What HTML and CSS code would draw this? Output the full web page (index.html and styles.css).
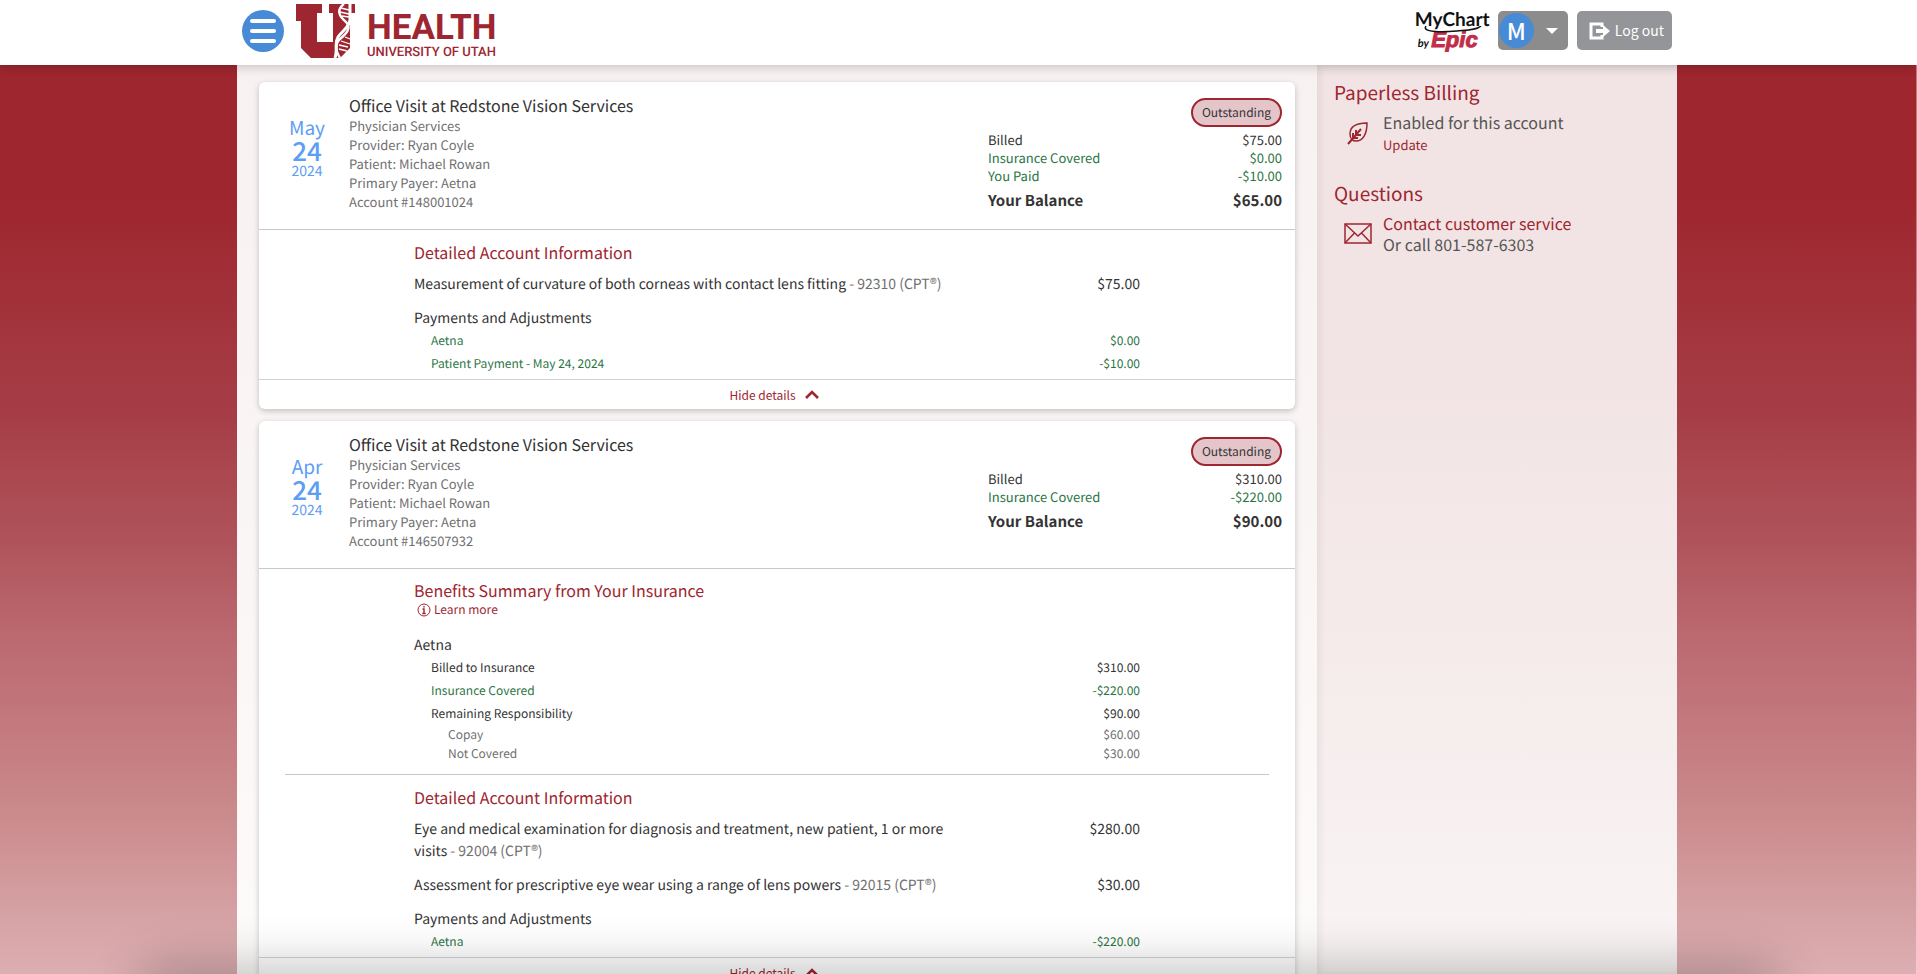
FILE: index.html
```html
<!DOCTYPE html>
<html lang="en">
<head>
<meta charset="utf-8">
<title>MyChart - Billing Account Details</title>
<link rel="stylesheet" href="styles.css">
</head>
<body>
<header class="topbar">
  <div class="topbar-inner">
    <button class="menu-button" type="button" aria-label="Menu"><span></span><span></span><span></span></button>
    <a class="brand" href="#" aria-label="University of Utah Health">
      <svg class="brand-mark" viewBox="0 0 59 54" aria-hidden="true">
        <path fill="#9e2630" d="M0 0H26V9H21V38H37V9H33V0H59V9H54V44L44 54H15L5 44V17H0Z"/>
        <path fill="none" stroke="#fff" stroke-width="2.4" d="M48 0C40 6 43 12 50 18C56 24 50 30 44 35C39 40 39 46 44 54"/>
        <path fill="none" stroke="#fff" stroke-width="3" d="M54 0V14C55 22 46 27 42 33C38 40 42 46 39 54"/>
        <path fill="none" stroke="#fff" stroke-width="1.3" d="M45 4L53 6M44 8L53 10M46 12L53 13M45 37L54 40M43 41L52 43M43 45L51 47M49 33L54 35"/>
      </svg>
      <span class="brand-text"><span class="brand-name">HEALTH</span><span class="brand-sub">UNIVERSITY OF UTAH</span></span>
    </a>
    <div class="topbar-right">
      <a class="mychart" href="#" aria-label="MyChart by Epic">
        <span class="mychart-name">MyChart</span>
        <svg class="swoosh" viewBox="0 0 60 7" aria-hidden="true"><path fill="none" stroke="#111" stroke-width="1.5" d="M3 0C-2 7 22 6 34 5C45 4 54 4 58 0"/></svg>
        <span class="mychart-by">by <b>Epic</b></span>
      </a>
      <button class="user-button" type="button" aria-label="Account menu"><span class="avatar">M</span><span class="caret"></span></button>
      <button class="logout-button" type="button">
        <svg width="21" height="20" viewBox="0 0 21 20" aria-hidden="true"><path fill="none" stroke="#fff" stroke-width="3" d="M13 6V3H2V17H13V14"/><path fill="#fff" d="M7 8H14V4L21 10L14 16V12H7Z"/></svg>
        Log out
      </button>
    </div>
  </div>
</header>
<div class="page">
  <main class="main">
    <article class="card">
      <div class="visit">
        <div class="date"><span class="month">May</span><span class="day">24</span><span class="year">2024</span></div>
        <div class="visit-info">
          <h2>Office Visit at Redstone Vision Services</h2>
          <p>Physician Services</p><p>Provider: Ryan Coyle</p><p>Patient: Michael Rowan</p><p>Primary Payer: Aetna</p><p>Account #148001024</p>
        </div>
        <div class="totals">
          <span class="pill">Outstanding</span>
          <div class="row"><span>Billed</span><span>$75.00</span></div>
          <div class="row green"><span>Insurance Covered</span><span>$0.00</span></div>
          <div class="row green"><span>You Paid</span><span>-$10.00</span></div>
          <div class="row balance"><span>Your Balance</span><span>$65.00</span></div>
        </div>
      </div>
      <section class="details">
        <h3>Detailed Account Information</h3>
        <div class="item"><span>Measurement of curvature of both corneas with contact lens fitting <span class="code">- 92310 (CPT®)</span></span><span>$75.00</span></div>
        <h4>Payments and Adjustments</h4>
        <div class="sub green"><span>Aetna</span><span>$0.00</span></div>
        <div class="sub green"><span>Patient Payment - May 24, 2024</span><span>-$10.00</span></div>
      </section>
      <button class="toggle" type="button">Hide details <svg width="14" height="9" viewBox="0 0 14 9" aria-hidden="true"><path fill="none" stroke="currentColor" stroke-width="2.6" d="M1 8L7 2L13 8"/></svg></button>
    </article>

    <article class="card">
      <div class="visit">
        <div class="date"><span class="month">Apr</span><span class="day">24</span><span class="year">2024</span></div>
        <div class="visit-info">
          <h2>Office Visit at Redstone Vision Services</h2>
          <p>Physician Services</p><p>Provider: Ryan Coyle</p><p>Patient: Michael Rowan</p><p>Primary Payer: Aetna</p><p>Account #146507932</p>
        </div>
        <div class="totals">
          <span class="pill">Outstanding</span>
          <div class="row"><span>Billed</span><span>$310.00</span></div>
          <div class="row green"><span>Insurance Covered</span><span>-$220.00</span></div>
          <div class="row balance"><span>Your Balance</span><span>$90.00</span></div>
        </div>
      </div>
      <section class="details benefits">
        <h3>Benefits Summary from Your Insurance</h3>
        <a class="learn" href="#"><svg width="14" height="14" viewBox="0 0 14 14" aria-hidden="true"><circle cx="7" cy="7" r="6" fill="none" stroke="currentColor"/><path fill="none" stroke="currentColor" stroke-width="1.4" d="M7 3V4.600M5.500 6H7V10.500M5.300 10.500H8.700"/></svg>Learn more</a>
        <h4>Aetna</h4>
        <div class="sub"><span>Billed to Insurance</span><span>$310.00</span></div>
        <div class="sub green"><span>Insurance Covered</span><span>-$220.00</span></div>
        <div class="sub"><span>Remaining Responsibility</span><span>$90.00</span></div>
        <div class="subsub"><span>Copay</span><span>$60.00</span></div>
        <div class="subsub"><span>Not Covered</span><span>$30.00</span></div>
      </section>
      <hr class="divider">
      <section class="details">
        <h3>Detailed Account Information</h3>
        <div class="item"><span>Eye and medical examination for diagnosis and treatment, new patient, 1 or more visits <span class="code">- 92004 (CPT®)</span></span><span>$280.00</span></div>
        <div class="item"><span>Assessment for prescriptive eye wear using a range of lens powers <span class="code">- 92015 (CPT®)</span></span><span>$30.00</span></div>
        <h4>Payments and Adjustments</h4>
        <div class="sub green"><span>Aetna</span><span>-$220.00</span></div>
      </section>
      <button class="toggle" type="button">Hide details <svg width="14" height="9" viewBox="0 0 14 9" aria-hidden="true"><path fill="none" stroke="currentColor" stroke-width="2.6" d="M1 8L7 2L13 8"/></svg></button>
    </article>
  </main>
  <aside class="sidebar">
    <h2>Paperless Billing</h2>
    <div class="side-item">
      <svg width="28" height="24" viewBox="0 0 28 24" aria-hidden="true"><g fill="none" stroke="#9e2630" stroke-width="1.500"><path d="M23 2C12 2 6 6 6 13C6 18 9 20 12 20C19 20 23 13 23 2Z"/><path stroke-width="2" d="M4 23L17 8M9 12V17H14M12 9V14H17"/></g></svg>
      <div><p>Enabled for this account</p><a class="small" href="#">Update</a></div>
    </div>
    <h2>Questions</h2>
    <div class="side-item">
      <svg width="28" height="24" viewBox="0 0 28 24" aria-hidden="true"><g fill="none" stroke="#9e2630" stroke-width="1.500"><rect x="1" y="2" width="26" height="19"/><path d="M1 2L14 14L27 2M1 21L10.500 11M27 21L17.500 11"/></g></svg>
      <div><a href="#">Contact customer service</a><p>Or call 801-587-6303</p></div>
    </div>
  </aside>
</div>
<div class="bottom-shade"></div>
</body>
</html>
```
FILE: styles.css
```css
* { box-sizing: border-box; }
html { height: 100%; overflow: hidden; }
body {
  margin: 0;
  padding-right: 2px;
  border-right: 1px solid rgba(255, 255, 255, .4);
  height: 100vh;
  overflow: hidden;
  display: flex;
  flex-direction: column;
  font-family: "Noto Sans CJK SC", "Open Sans", sans-serif;
  font-size: 13px;
  line-height: 19px;
  text-rendering: geometricPrecision;
  color: #333;
  background: linear-gradient(#fff 65px, #9e262e 65px, #9e262e 20%, #a63e47 43%, #af5259 55%, #bb686f 65%, #c98789 82%, #dcafb2 100%);
}
h2, h3, h4, p { margin: 0; font-weight: 400; }
a { color: #9e2630; text-decoration: none; }
button { font: inherit; border: 0; cursor: pointer; }

.topbar { flex: none; height: 65px; margin-right: -2px; padding-right: 2px; background: #fff; box-shadow: 0 2px 10px rgba(0, 0, 0, .2); position: relative; z-index: 2; }
.topbar-inner { max-width: 1440px; height: 100%; margin: 0 auto; padding: 4px 5px 8px; display: flex; align-items: flex-start; }
.menu-button { width: 42px; height: 42px; margin: 6px 12px 0 0; padding: 0 8px; border-radius: 50%; background: #478ad6; display: flex; flex-direction: column; justify-content: center; gap: 6px; }
.menu-button span { height: 4px; border-radius: 2px; background: #fff; }
.brand { display: flex; gap: 12px; color: #9e2630; }
.brand-mark { width: 59px; height: 54px; }
.brand-text { display: flex; flex-direction: column; padding-top: 6px; font-family: "Roboto", sans-serif; }
.brand-name { font-size: 35px; line-height: 36px; font-weight: 700; }
.brand-sub { font-size: 13px; line-height: 14px; font-weight: 500; }
.topbar-right { margin-left: auto; display: flex; align-items: flex-start; gap: 9px; padding-top: 7px; }
.mychart { position: relative; width: 74px; display: flex; flex-direction: column; color: #111; font-family: "Lato", sans-serif; }
.mychart-name { font-size: 19px; line-height: 18px; font-weight: 700; }
.swoosh { position: absolute; top: 15px; left: 8px; width: 60px; height: 7px; }
.mychart-by { padding-left: 3px; font-size: 11px; line-height: 22px; font-style: italic; font-weight: 700; white-space: nowrap; }
.mychart-by b { font-family: "Liberation Sans", sans-serif; font-size: 22px; color: #c22d48; -webkit-text-stroke: 1px #c22d48; }
.user-button { width: 70px; height: 39px; padding: 0 10px 0 1px; border-radius: 5px; background: #8c8c8c; display: flex; align-items: center; justify-content: space-between; }
.avatar { width: 35px; height: 35px; border-radius: 50%; background: #478ad6; color: #fff; font-size: 23px; line-height: 34px; font-weight: 500; text-align: center; }
.caret { border: 6px solid transparent; border-top-color: #fff; border-bottom: 0; }
.logout-button { height: 39px; padding: 0 8px 0 12px; border-radius: 5px; background: #939598; color: #fff; font-size: 14px; display: flex; align-items: center; gap: 5px; }

.page { flex: 1; min-height: 0; width: 100%; max-width: 1440px; margin: 0 auto; display: flex; background: linear-gradient(#f8f1f1, #fdfafa); }
.main { flex: 1; padding: 17px 22px 0; display: flex; flex-direction: column; gap: 12px; }
.card { flex: none; background: #fff; border-radius: 6px; box-shadow: 0 2px 6px rgba(0, 0, 0, .22); }
.visit { display: flex; height: 148px; padding: 12px 13px 0 31px; border-bottom: 1px solid #c8c8c8; }
.date { width: 34px; margin-right: 25px; padding-top: 22px; display: flex; flex-direction: column; align-items: center; color: #5c9df5; }
.month { font-size: 19px; line-height: 24px; }
.day { font-size: 26px; line-height: 22px; font-weight: 500; }
.year { font-size: 14px; line-height: 18px; }
.visit-info { flex: 1; color: #707070; }
.visit-info h2 { font-size: 16px; line-height: 22px; color: #333; }
.totals { width: 294px; padding-top: 4px; display: flex; flex-direction: column; line-height: 18px; }
.pill { align-self: flex-end; height: 29px; padding: 0 9px; margin-bottom: 4px; border: 2px solid #9e2630; border-radius: 15px; background: #e3c5ca; font-size: 12px; line-height: 25px; }
.row { display: flex; justify-content: space-between; }
.green { color: #2b7545; }
.balance { margin-top: 5px; font-size: 15px; line-height: 22px; font-weight: 700; }
.details { padding: 10px 155px 4px 155px; }
.details h3 { font-size: 16px; line-height: 24px; color: #9e2630; }
.details h4 { font-size: 14px; line-height: 22px; }
.item { display: flex; justify-content: space-between; margin: 9px 0 12px; font-size: 14px; line-height: 22px; }
.item > :first-child { max-width: 540px; }
.code { color: #707070; }
.sub, .subsub { display: flex; justify-content: space-between; padding-left: 17px; font-size: 12px; line-height: 23px; }
.subsub { padding-left: 34px; line-height: 19px; color: #707070; }
.learn { display: flex; align-items: center; gap: 3px; padding-left: 3px; margin-bottom: 16px; font-size: 12px; line-height: 16px; }
.benefits { padding-top: 9px; padding-bottom: 11px; }
.divider { margin: 0 26px; border: 0; border-top: 1px solid #c8c8c8; }
.toggle { width: 100%; height: 30px; padding-right: 12px; display: flex; align-items: center; justify-content: center; gap: 9px; border-top: 1px solid #d2d2d2; border-radius: 0 0 6px 6px; background: none; font-size: 12px; color: #9e2630; }

.sidebar { width: 360px; padding: 15px 17px; background: linear-gradient(#f2e4e4 35%, #f9f4f4); box-shadow: inset 4px 0 6px rgba(0, 0, 0, .05); font-size: 16px; line-height: 21px; color: #555; }
.sidebar h2 { font-size: 19px; line-height: 25px; color: #9e2630; }
.side-item { display: flex; gap: 11px; padding: 7px 0 26px 10px; }
.side-item svg { flex: none; margin-top: 9px; }
.small { font-size: 13px; }
.bottom-shade { position: fixed; left: 8%; right: 8%; bottom: -20px; height: 10px; border-radius: 20px; box-shadow: 0 0 50px 14px rgba(0, 0, 0, .3); z-index: 3; }
```
